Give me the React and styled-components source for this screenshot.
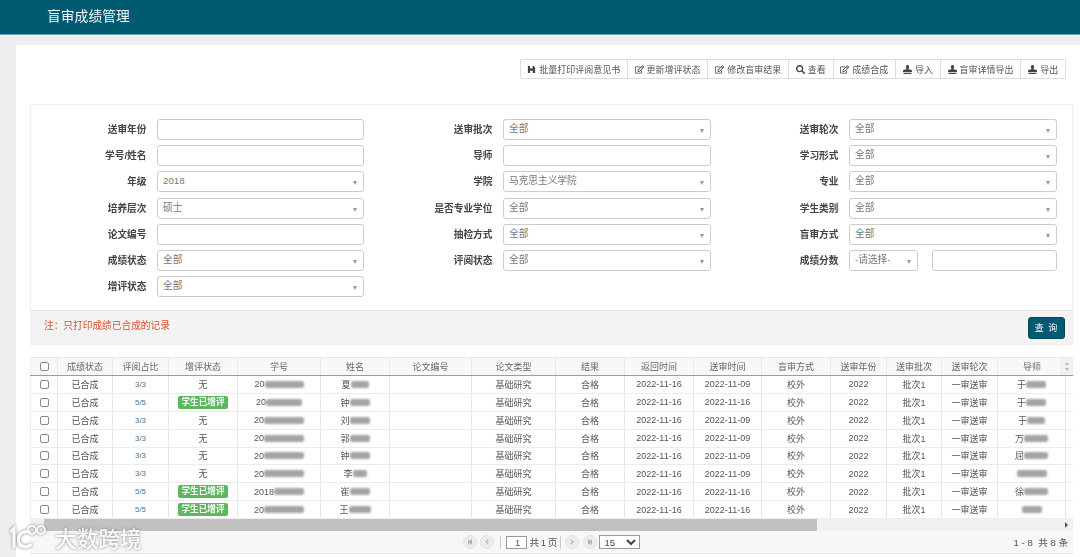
import React from "react";
import styled, { createGlobalStyle } from "styled-components";
import { FaRegEdit, FaSearch, FaStamp, FaStepBackward, FaStepForward, FaChevronLeft, FaChevronRight } from "react-icons/fa";

const Global = createGlobalStyle`
  html, body { margin: 0; padding: 0; height: 557px; overflow: hidden; background: #eeeff1; }
  body { font-family: "Liberation Sans", "Noto Sans CJK SC", sans-serif; color: #555; }
  * { box-sizing: border-box; }
`;

const Page = styled.div`position: relative; width: 1080px; height: 557px; overflow: hidden; filter: blur(.3px);`;
const TopBar = styled.header`
  height: 35px; background: #005b72; border-bottom: 1px solid #6f9fae;
  padding-left: 47px; display: flex; align-items: center;
  color: #f3f8fa; font-size: 13.8px; line-height: 1;
`;
const Panel = styled.main`
  margin: 10px 0 0 16px; height: 512px; background: #fff; padding: 14px 7px 0 14px;
`;
const Toolbar = styled.div`display: flex; justify-content: flex-end; margin-right: 7px; height: 20px;`;
const ToolButton = styled.button`
  height: 20px; padding: 0 6.8px; display: flex; align-items: center; gap: 3px;
  background: #fff; border: 1px solid #ddd; border-left-width: 0;
  font: 9px "Liberation Sans", "Noto Sans CJK SC", sans-serif; color: #555; white-space: nowrap;
  &:first-child { border-left-width: 1px; border-radius: 2px 0 0 2px; padding: 0 6.5px; }
  &:last-child { border-radius: 0 2px 2px 0; }
  svg { width: 9px; height: 9px; color: #444; flex: none; }
`;
const FilterBox = styled.section`margin-top: 25px; border: 1px solid #eee; height: 241px; display: flex; flex-direction: column;`;
const FormGrid = styled.div`
  flex: 1; padding-top: 14px;
  display: grid; grid-template-columns: 126px 207px 139px 208px 138px 208px; grid-auto-rows: 21px; row-gap: 5.2px;
`;
const Label = styled.label`
  padding-right: 10.5px; text-align: right; line-height: 21px; font-size: 9.7px; font-weight: 700; color: #444;
`;
const TextInput = styled.input`
  width: 100%; height: 21px; border: 1px solid #ccc; border-radius: 3px; background: #fff; padding: 0 5px; outline: none;
  min-width: 0;
`;
const Combo = styled.div`
  position: relative; height: 21px; width: ${p => p.$w || "100%"}; flex: none;
  border: 1px solid #ccc; border-radius: 3px; background: #fff; padding: 0 5px;
  font-size: 9.7px; line-height: 18px; color: #777;
  &::after {
    content: ""; position: absolute; right: 6px; top: 9px;
    border-left: 2.5px solid transparent; border-right: 2.5px solid transparent; border-top: 4px solid #999;
  }
`;
const Score = styled.div`display: flex; gap: 14px; height: 21px;`;
const FormFoot = styled.div`
  height: 34px; background: #f3f3f3; border-top: 1px solid #e8e8e8; padding: 0 7px 0 13px;
  display: flex; align-items: center; justify-content: space-between;
`;
const Note = styled.span`font-size: 9.7px; color: #d9512f; position: relative; top: -3px;`;
const QueryButton = styled.button`
  width: 37px; height: 22px; background: #005b72; border: 1px solid #00495d; border-radius: 3px; color: #fff;
  font: 9px "Liberation Sans", "Noto Sans CJK SC", sans-serif; padding: 0; letter-spacing: 1px;
`;

const COLS = "28px 55px 56px 69px 83px 69px 82px 84px 69px 69px 68px 69px 56px 55px 56px 68px 7px";
const Grid = styled.div`margin-top: 12px; border-top: 1px solid #e9e9e9; height: 196px; width: 1043px;`;
const HeadRow = styled.div`
  display: grid; grid-template-columns: ${COLS}; height: 18px; background: #f8f8f8; border-bottom: 1px solid #6aaec4;
  color: #666; font-size: 9px;
`;
const Rows = styled.div`height: 143px; display: grid; grid-auto-rows: 1fr;`;
const Row = styled.div`display: grid; grid-template-columns: ${COLS}; border-bottom: 1px solid #ececec; min-height: 0;`;
const Cell = styled.div`
  display: flex; align-items: center; justify-content: center; border-right: 1px solid #e7e7e7;
  font-size: 9px; white-space: nowrap; overflow: hidden; min-width: 0;
  &:first-child { border-left: 1px solid #eee; }
`;
const HeadLast = styled(Cell)`border-right: 0;`;
const Ratio = styled.span`color: #4a7295; font-size: 8px;`;
const Badge = styled.span`
  background: #5cb85c; color: #fff; font-size: 8.6px; font-weight: 700; line-height: 13px; height: 13px;
  width: 50px; text-align: center; border-radius: 2px;
`;
const Check = styled.input.attrs({ type: "checkbox" })`
  appearance: none; width: 9px; height: 9px; margin: 0; border: 1px solid #8a8a8a; border-radius: 2px; background: #fff;
`;
const Smudge = styled.span`
  display: inline-block; width: ${p => p.$w}px; height: 7px; background: #a4a4a4; filter: blur(1px); border-radius: 2px;
`;
const ScrollStepper = styled.div`
  margin-left: -6px; display: flex; flex-direction: column; gap: 3px; align-items: center; justify-content: center; background: #f1f1f1;
  i { display: block; border-left: 2.5px solid transparent; border-right: 2.5px solid transparent; }
  i:first-child { border-bottom: 3px solid #bbb; }
  i:last-child { border-top: 3px solid #bbb; }
`;
const HScroll = styled.div`
  height: 12px; background: #f1f1f1; padding: 0 5px 0 14px; display: flex; align-items: center; justify-content: space-between;
`;
const Thumb = styled.div`width: 773px; height: 12px; background: #c1c1c1;`;
const ArrowRight = styled.i`border-top: 3px solid transparent; border-bottom: 3px solid transparent; border-left: 3px solid #555;`;
const Pager = styled.nav`
  height: 23px; background: #f7f7f7; border-bottom: 1px solid #e6e6e6; font-size: 9.6px; color: #555;
  display: grid; grid-template-columns: 1fr auto 1fr; align-items: center;
`;
const PagerMid = styled.div`display: flex; align-items: center;`;
const PageText = styled.span`word-spacing: -1px;`;
const PageBtn = styled.button`
  width: 14px; height: 14px; border-radius: 50%; border: 1px solid #e4e4e4; background: #ececec; padding: 0; margin-right: 3.5px;
  display: flex; align-items: center; justify-content: center; color: #aaa;
  svg { width: 6px; height: 6px; }
`;
const Divider = styled.span`width: 1px; height: 13px; background: ${p => p.$c || "#ccc"}; margin: 0 ${p => p.$r || 5}px 0 ${p => p.$l || 2}px;`;
const PageInput = styled.input`
  width: 21px; height: 13px; border: 1px solid #999; font-size: 9.6px; text-align: center; color: #555; padding: 0 0 0 3px; margin-right: 3px; background: #fff;
`;
const PageSize = styled.select`
  width: 41px; height: 13.5px; font-size: 9.6px; border: 1px solid #999; background: #fff; color: #444; padding: 0; margin-left: -1px; border-radius: 0;
`;
const PagerInfo = styled.div`text-align: right; padding-right: 5px; white-space: pre;`;

const Watermark = styled.div`
  position: absolute; left: 10px; top: 521px; display: flex; align-items: center; gap: 3px; pointer-events: none;
  color: rgba(255,255,255,.95); text-shadow: 0 0 3px rgba(90,90,90,.75);
  svg { filter: drop-shadow(0 0 1.5px rgba(90,90,90,.8)); }
`;
const WatermarkText = styled.span`font-size: 21.5px; line-height: 1; margin-top: 7px; letter-spacing: .2px; font-weight: 500;`;

const SaveIcon = () => (
  <svg viewBox="0 0 10 10"><path fill="currentColor" d="M1 1h2.4v3h2.8V1h1.2L9 2.6V9H6.4V6.4H3.4V9H1z" /></svg>
);

const tools = [
  [<SaveIcon key="s" />, "批量打印评阅意见书"],
  [<FaRegEdit key="e1" />, "更新增评状态"],
  [<FaRegEdit key="e2" />, "修改盲审结果"],
  [<FaSearch key="q" />, "查看"],
  [<FaRegEdit key="e3" />, "成绩合成"],
  [<FaStamp key="i" />, "导入"],
  [<FaStamp key="d" />, "盲审详情导出"],
  [<FaStamp key="o" />, "导出"],
];

const T = ({ l, v }) => (<><Label>{l}</Label><TextInput defaultValue={v || ""} /></>);
const S = ({ l, v = "全部" }) => (<><Label>{l}</Label><Combo>{v}</Combo></>);

const heads = ["成绩状态","评阅占比","增评状态","学号","姓名","论文编号","论文类型","结果","返回时间","送审时间","盲审方式","送审年份","送审批次","送审轮次"];

const rows = [
  ["3/3", 0, "20", 39, "夏", 18, "于", 20, "2022-11-09"],
  ["5/5", 1, "20", 36, "钟", 20, "于", 20, "2022-11-16"],
  ["3/3", 0, "20", 40, "刘", 20, "于", 18, "2022-11-09"],
  ["3/3", 0, "20", 40, "郭", 20, "万", 24, "2022-11-09"],
  ["3/3", 0, "20", 40, "钟", 20, "屈", 24, "2022-11-09"],
  ["3/3", 0, "20", 40, "李", 14, "", 30, "2022-11-09"],
  ["5/5", 1, "2018", 30, "崔", 20, "徐", 24, "2022-11-16"],
  ["5/5", 1, "20", 40, "王", 22, "", 20, "2022-11-16"],
];

export default function App() {
  return (
    <Page>
      <Global />
      <TopBar>盲审成绩管理</TopBar>
      <Panel>
        <Toolbar>
          {tools.map(([icon, text]) => <ToolButton key={text}>{icon}{text}</ToolButton>)}
        </Toolbar>
        <FilterBox>
          <FormGrid>
            <T l="送审年份" /><S l="送审批次" /><S l="送审轮次" />
            <T l="学号/姓名" /><T l="导师" /><S l="学习形式" />
            <S l="年级" v="2018" /><S l="学院" v="马克思主义学院" /><S l="专业" />
            <S l="培养层次" v="硕士" /><S l="是否专业学位" /><S l="学生类别" />
            <T l="论文编号" /><S l="抽检方式" /><S l="盲审方式" />
            <S l="成绩状态" /><S l="评阅状态" />
            <Label>成绩分数</Label>
            <Score><Combo $w="69px">-请选择-</Combo><TextInput /></Score>
            <S l="增评状态" />
          </FormGrid>
          <FormFoot>
            <Note>注：只打印成绩已合成的记录</Note>
            <QueryButton>查 询</QueryButton>
          </FormFoot>
        </FilterBox>
        <Grid>
          <HeadRow>
            <Cell><Check /></Cell>
            {heads.map(h => <Cell key={h}>{h}</Cell>)}
            <HeadLast>导师</HeadLast>
            <ScrollStepper><i /><i /></ScrollStepper>
          </HeadRow>
          <Rows>
            {rows.map((r, i) => (
              <Row key={i}>
                <Cell><Check /></Cell>
                <Cell>已合成</Cell>
                <Cell><Ratio>{r[0]}</Ratio></Cell>
                <Cell>{r[1] ? <Badge>学生已增评</Badge> : "无"}</Cell>
                <Cell>{r[2]}<Smudge $w={r[3]} /></Cell>
                <Cell>{r[4]}<Smudge $w={r[5]} /></Cell>
                <Cell />
                <Cell>基础研究</Cell>
                <Cell>合格</Cell>
                <Cell>2022-11-16</Cell>
                <Cell>{r[8]}</Cell>
                <Cell>校外</Cell>
                <Cell>2022</Cell>
                <Cell>批次1</Cell>
                <Cell>一审送审</Cell>
                <Cell>{r[6]}<Smudge $w={r[7]} /></Cell>
              </Row>
            ))}
          </Rows>
          <HScroll><Thumb /><ArrowRight /></HScroll>
          <Pager>
            <span />
            <PagerMid>
              <PageBtn><FaStepBackward /></PageBtn>
              <PageBtn><FaChevronLeft /></PageBtn>
              <Divider />
              <PageInput defaultValue="1" />
              <PageText>共 1 页</PageText>
              <Divider $c="#b9d3de" $l={3} $r={4} />
              <PageBtn><FaChevronRight /></PageBtn>
              <PageBtn><FaStepForward /></PageBtn>
              <PageSize defaultValue="15"><option>15</option></PageSize>
            </PagerMid>
            <PagerInfo>1 - 8  共 8 条</PagerInfo>
          </Pager>
        </Grid>
      </Panel>
      <Watermark>
        <svg width="42" height="32" viewBox="0 0 42 32" fill="none" stroke="rgba(255,255,255,.95)" strokeLinecap="round">
          <path d="M1.5 10l2.5-2.5V26" strokeWidth="3.2" />
          <path d="M19 11C12 9.5 7.5 14 8.5 20c1 5.5 7 7.5 12 4" strokeWidth="3.2" />
          <circle cx="22" cy="9" r="4" strokeWidth="1.9" />
          <circle cx="31" cy="9" r="4" strokeWidth="1.9" />
        </svg>
        <WatermarkText>大数跨境</WatermarkText>
      </Watermark>
    </Page>
  );
}
